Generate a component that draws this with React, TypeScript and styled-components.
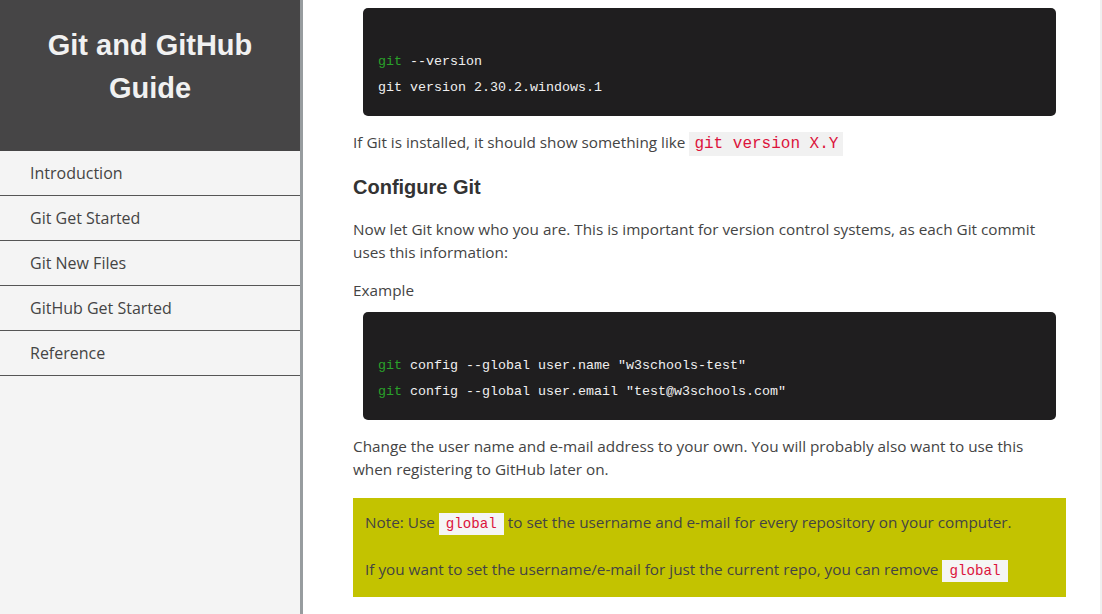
import React from "react";
import styled, { createGlobalStyle } from "styled-components";

const Global = createGlobalStyle`
  html, body { margin: 0; padding: 0; background: #fff; }
  body { font-family: "Open Sans", "Liberation Sans", sans-serif; }
  * { box-sizing: border-box; }
`;

const Page = styled.div`
  display: flex;
  width: 1102px;
  height: 614px;
  overflow: hidden;
`;

const Sidebar = styled.aside`
  width: 303px;
  flex: none;
  background: #f4f4f4;
  border-right: 3px solid #979c9f;
  display: flex;
  flex-direction: column;
`;

const SideHeader = styled.header`
  height: 151px;
  background: #464546;
  display: flex;
  justify-content: center;
  padding-top: 24px;
`;

const Title = styled.h1`
  margin: 0;
  font-family: "Liberation Sans", Arial, sans-serif;
  font-weight: 700;
  font-size: 29px;
  line-height: 43px;
  color: #f1f1f1;
  text-align: center;
`;

const Nav = styled.nav`
  display: flex;
  flex-direction: column;
`;

const NavItem = styled.a`
  display: flex;
  align-items: center;
  height: 45px;
  padding: 0 0 0 30px;
  border-bottom: 1px solid #555;
  font-size: 16px;
  color: #444;
  text-decoration: none;
`;

const Main = styled.main`
  flex: 1;
  padding: 8px 34px 0 50px;
  display: flex;
  flex-direction: column;
  border-right: 2px solid #f0f0f0;
`;

const CodeBlock = styled.pre<{ $top: number }>`
  margin: ${(p) => p.$top}px 10px 0 10px;
  padding: 41px 15px 15px 15px;
  background: #1f1e1f;
  border-radius: 5px;
  font-family: "Liberation Mono", "Courier New", monospace;
  font-size: 13.33px;
  line-height: 26px;
  color: #f0f0f0;
  white-space: pre;
`;

const Cmd = styled.span`
  color: #2aa22a;
`;

const Para = styled.p<{ $top: number }>`
  margin: ${(p) => p.$top}px 0 0 0;
  font-size: 15.3px;
  line-height: 23px;
  color: #444;
`;

const Heading = styled.h2`
  margin: 21px 0 0 0;
  font-family: "Liberation Sans", Arial, sans-serif;
  font-weight: 700;
  font-size: 20px;
  line-height: 24px;
  color: #333;
`;

const InlineCode = styled.code<{ $size: number; $pad: number; $bg: string }>`
  font-family: "Liberation Mono", "Courier New", monospace;
  font-size: ${(p) => p.$size}px;
  line-height: 1;
  color: #dc143c;
  background: ${(p) => p.$bg};
  padding: 3px ${(p) => p.$pad}px;
`;

const Note = styled.div`
  margin-top: 17px;
  background: #c3c300;
  padding: 13px 12px 16px 12px;
  display: flex;
  flex-direction: column;
  gap: 24px;
`;

const NoteLine = styled.p`
  margin: 0;
  font-size: 15.3px;
  line-height: 23px;
  color: #444;
`;

const navItems = ["Introduction", "Git Get Started", "Git New Files", "GitHub Get Started", "Reference"];

export default function App() {
  return (
    <>
      <Global />
      <Page>
        <Sidebar>
          <SideHeader>
            <Title>
              Git and GitHub
              <br />
              Guide
            </Title>
          </SideHeader>
          <Nav>
            {navItems.map((n) => (
              <NavItem key={n}>{n}</NavItem>
            ))}
          </Nav>
        </Sidebar>
        <Main>
          <CodeBlock $top={0}>
            <Cmd>git</Cmd> --version{"\n"}git version 2.30.2.windows.1
          </CodeBlock>
          <Para $top={15}>
            If Git is installed, it should show something like{" "}
            <InlineCode $size={16} $pad={5} $bg="#f1f1f1">git version X.Y</InlineCode>
          </Para>
          <Heading>Configure Git</Heading>
          <Para $top={19}>
            Now let Git know who you are. This is important for version control systems, as each Git commit
            uses this information:
          </Para>
          <Para $top={15}>Example</Para>
          <CodeBlock $top={10}>
            <Cmd>git</Cmd> config --global user.name "w3schools-test"{"\n"}
            <Cmd>git</Cmd> config --global user.email "test@w3schools.com"
          </CodeBlock>
          <Para $top={15}>
            Change the user name and e-mail address to your own. You will probably also want to use this
            when registering to GitHub later on.
          </Para>
          <Note>
            <NoteLine>
              Note: Use{" "}
              <InlineCode $size={14.2} $pad={7} $bg="#f5f5f5">global</InlineCode> to set the username and e-mail
              for every repository on your computer.
            </NoteLine>
            <NoteLine>
              If you want to set the username/e-mail for just the current repo, you can remove{" "}
              <InlineCode $size={14.2} $pad={7} $bg="#f5f5f5">global</InlineCode>
            </NoteLine>
          </Note>
        </Main>
      </Page>
    </>
  );
}
